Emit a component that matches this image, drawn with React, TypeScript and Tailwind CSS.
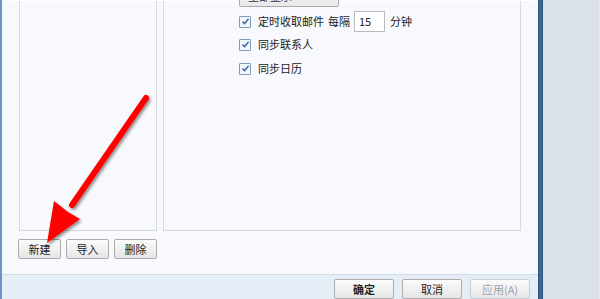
import React from 'react';

const font = { fontFamily: '"Microsoft YaHei", "Noto Sans CJK SC", "Noto Sans", sans-serif' };

function Check() {
  return (
    <span className="w-[12px] h-[12px] border border-[#7e9cc2] bg-[#f3f7fc] rounded-[1px] flex items-center justify-center flex-shrink-0">
      <svg width="9" height="9" viewBox="0 0 9 9">
        <path d="M1.5 4.6 L3.6 6.6 L7.6 1.8" fill="none" stroke="#3c6fa8" strokeWidth="1.5" />
      </svg>
    </span>
  );
}

function Btn({ label, w, disabled, bold }: { label: string; w: string; disabled?: boolean; bold?: boolean }) {
  return (
    <div
      className={`${w} h-[20px] border rounded-[2px] flex items-center justify-center text-[11px] bg-gradient-to-b from-[#fbfbfb] to-[#e6e6e6] ${
        disabled ? 'border-[#c9ced6] text-[#9ea4ad]' : 'border-[#acacac] text-[#222]'
      } ${bold ? 'font-semibold' : ''}`}
    >
      {label}
    </div>
  );
}

export default function App() {
  return (
    <div style={font} className="relative w-[600px] h-[299px] overflow-hidden flex bg-[#dbe1e9]">
      {/* Dialog body */}
      <div className="w-[538px] h-full flex flex-col border-l-2 border-[#6d94c0] bg-[#f7f9fd]">
        <div className="flex-1 flex flex-col border-t border-white">
          <div className="flex gap-[6px] pl-[17px] h-[230px]">
            {/* Account list */}
            <div className="w-[138px] h-full border border-t-0 border-[#d6d9de] bg-[#f7f9fd]" />
            {/* Settings panel */}
            <div className="w-[358px] h-full border border-t-0 border-[#d6d9de] bg-[#f7f9fd] pl-[75px] flex flex-col">
              <div className="w-[100px] h-[22px] mt-[-16px] border border-[#acacac] rounded-[2px] bg-gradient-to-b from-[#fbfbfb] to-[#e8e8e8] text-[11px] text-[#333] pl-[8px] leading-[20px]">
                全部显示
              </div>
              <div className="flex items-center h-[23px] mt-[3px]">
                <Check />
                <span className="ml-[7px] w-[63px] text-[11px] text-[#222] whitespace-nowrap">定时收取邮件</span>
                <span className="ml-[7px] w-[22px] text-[11px] text-[#222] whitespace-nowrap">每隔</span>
                <div className="ml-[4px] w-[31px] h-[21px] border border-[#b8bcc2] bg-white text-[11px] text-[#222] pl-[4px] leading-[19px]">
                  15
                </div>
                <span className="ml-[5px] text-[11px] text-[#222]">分钟</span>
              </div>
              <div className="flex items-center h-[23px]">
                <Check />
                <span className="ml-[7px] text-[11px] text-[#222]">同步联系人</span>
              </div>
              <div className="flex items-center h-[23px] mt-[1px]">
                <Check />
                <span className="ml-[7px] text-[11px] text-[#222]">同步日历</span>
              </div>
            </div>
          </div>
          <div className="flex gap-[5px] pl-[16px] mt-[8px]">
            <Btn label="新建" w="w-[43px]" />
            <Btn label="导入" w="w-[43px]" />
            <Btn label="删除" w="w-[43px]" />
          </div>
        </div>
        {/* Footer */}
        <div className="h-[25px] border-t border-[#d5dde7] bg-[#e5edf7] flex items-start justify-end gap-[8px] pr-[8px] pt-[4px]">
          <Btn label="确定" w="w-[60px]" bold />
          <Btn label="取消" w="w-[60px]" />
          <Btn label="应用(A)" w="w-[60px]" disabled />
        </div>
      </div>
      {/* Window frame */}
      <div className="w-[5px] h-full bg-[#3d6692] border-x border-[#2f5580]" />
      <div className="flex-1 h-full bg-[#dbe1e9] border-r border-[#e9edf2]" />

      {/* Red annotation arrow */}
      <svg className="absolute left-0 top-0 pointer-events-none" width="600" height="299">
        <defs>
          <filter id="sh" x="-20%" y="-20%" width="140%" height="140%">
            <feDropShadow dx="1.5" dy="2" stdDeviation="1.5" floodColor="#000" floodOpacity="0.45" />
          </filter>
        </defs>
        <g filter="url(#sh)">
          <line x1="146" y1="98" x2="72" y2="205" stroke="#ff0000" strokeWidth="6" strokeLinecap="round" />
          <polygon points="47,243 54,201 68,212 80,219" fill="#ff0000" />
        </g>
      </svg>
    </div>
  );
}
